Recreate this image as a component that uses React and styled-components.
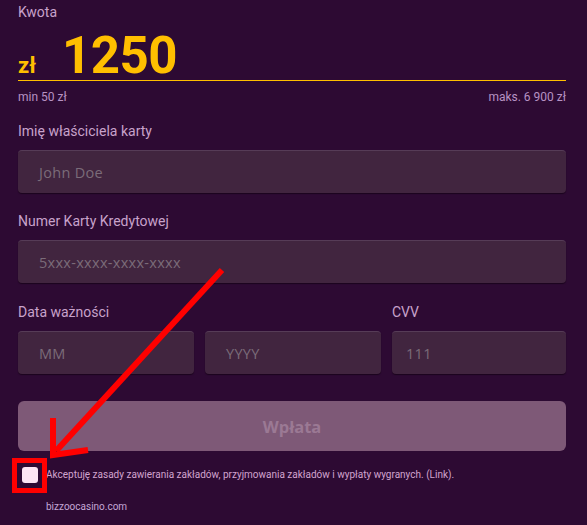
import styled, { createGlobalStyle } from 'styled-components'

const Global = createGlobalStyle`
    html, body {
        margin: 0;
        padding: 0;
        background: #2d0a33;
    }
    body {
        font-family: Roboto, "Liberation Sans", sans-serif;
    }
`
const Page = styled.div`
    position: relative;
    width: 587px;
    height: 525px;
    padding: 3px 21px 0 18px;
    box-sizing: border-box;
    overflow: hidden;
`
const Label = styled.div`
    font-size: 14px;
    line-height: 18px;
    color: #c8a2cb;
    margin-bottom: 10px;
`
const AmountRow = styled.div`
    display: flex;
    align-items: baseline;
    height: 60px;
    box-sizing: border-box;
    padding-top: 9px;
    border-bottom: 1px solid #ffbf00;
    margin-top: -10px;
`
const Currency = styled.span`
    font-size: 22px;
    font-weight: 700;
    color: #ffbf00;
    line-height: 1;
`
const Amount = styled.span`
    font-size: 51px;
    font-weight: 700;
    color: #ffbf00;
    line-height: 51px;
    margin-left: 26px;
    letter-spacing: -0.5px;
`
const Limits = styled.div`
    display: flex;
    justify-content: space-between;
    font-size: 12px;
    line-height: 14px;
    color: #b792c3;
    margin: 9px 0 18px;
`
const Field = styled.div`
    margin-bottom: ${p => p.$gap || 19}px;
`
const Input = styled.div`
    height: 43px;
    box-sizing: border-box;
    background: #41253f;
    border-top: 1px solid #563c57;
    border-radius: 4px;
    box-shadow: 0 1px 1px rgba(15, 0, 15, 0.6);
    display: flex;
    align-items: center;
    padding-left: ${p => p.$pad || 21}px;
    font-family: "Open Sans", "DejaVu Sans", sans-serif;
    font-size: 14.5px;
    letter-spacing: 0.3px;
    color: #7b6c79;
`
const Row = styled.div`
    display: grid;
    grid-template-columns: 176px 176px 1fr;
    column-gap: 11px;
`
const Button = styled.div`
    height: 50px;
    margin-top: 27px;
    border-radius: 6px;
    background: #7e5977;
    display: flex;
    align-items: center;
    justify-content: center;
    font-family: "Open Sans", "DejaVu Sans", sans-serif;
    font-weight: 700;
    font-size: 16.5px;
    color: #9b7994;
`
const Terms = styled.div`
    display: flex;
    align-items: center;
    margin-top: 16px;
    padding-left: 4px;
    gap: 8px;
    font-size: 10px;
    line-height: 16px;
    color: #d2a4cf;
`
const Box = styled.div`
    width: 16px;
    height: 16px;
    border-radius: 3px;
    background: #fde5f4;
    flex: none;
`
const Site = styled.div`
    margin-top: 17px;
    padding-left: 28px;
    font-size: 10px;
    line-height: 14px;
    color: #c4a6d6;
`
const Overlay = styled.svg`
    position: absolute;
    left: 0;
    top: 0;
    pointer-events: none;
`

export default function App() {
    return (
        <Page>
            <Global />
            <Label>Kwota</Label>
            <AmountRow>
                <Currency>zł</Currency>
                <Amount>1250</Amount>
            </AmountRow>
            <Limits>
                <span>min 50 zł</span>
                <span>maks. 6 900 zł</span>
            </Limits>
            <Field>
                <Label>Imię właściciela karty</Label>
                <Input>John Doe</Input>
            </Field>
            <Field $gap={20}>
                <Label>Numer Karty Kredytowej</Label>
                <Input>5xxx-xxxx-xxxx-xxxx</Input>
            </Field>
            <Row>
                <div>
                    <Label>Data ważności</Label>
                    <Input>MM</Input>
                </div>
                <div>
                    <Label>&nbsp;</Label>
                    <Input>YYYY</Input>
                </div>
                <div>
                    <Label>CVV</Label>
                    <Input $pad={14}>111</Input>
                </div>
            </Row>
            <Button>Wpłata</Button>
            <Terms>
                <Box />
                <span>Akceptuję zasady zawierania zakładów, przyjmowania zakładów i wypłaty wygranych. (Link).</span>
            </Terms>
            <Site>bizzoocasino.com</Site>
            <Overlay width="587" height="525" viewBox="0 0 587 525">
                <line x1="222" y1="270" x2="56" y2="451" stroke="#ff0000" strokeWidth="6" />
                <polyline points="53,418 53,455 88,450" fill="none" stroke="#ff0000" strokeWidth="6" />
                <rect x="14.5" y="460.5" width="30" height="30" fill="none" stroke="#ff0000" strokeWidth="5" />
            </Overlay>
        </Page>
    )
}
